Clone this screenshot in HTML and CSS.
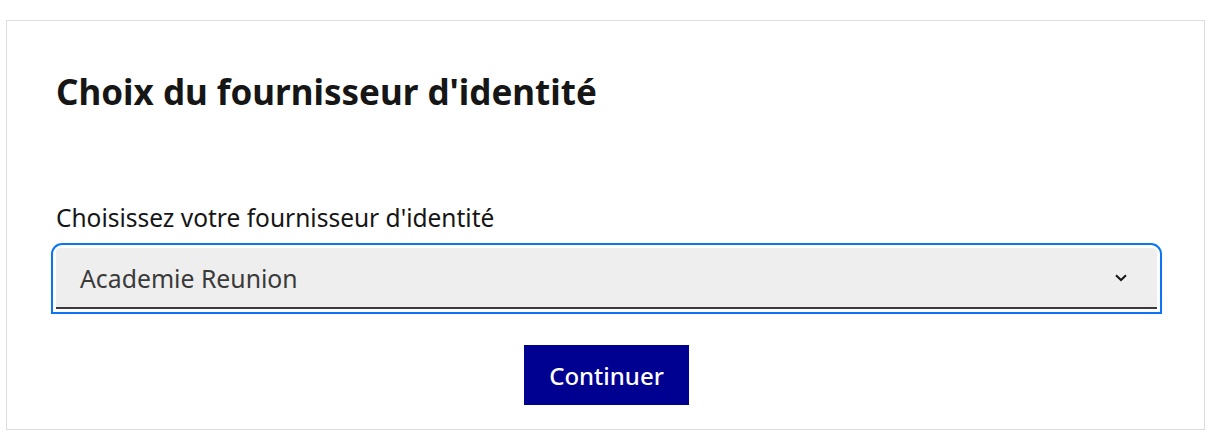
FILE: index.html
```html
<!DOCTYPE html>
<html lang="fr">
<head>
  <meta charset="UTF-8"/>
  <meta name="viewport" content="width=device-width, initial-scale=1.0"/>
  <title>Choix du fournisseur d'identité</title>
  <link rel="stylesheet" href="styles.css">
</head>
<body>
  <div class="card">
    <h1>Choix du fournisseur d'identité</h1>

    <form class="idp-form">
      <label for="idp" class="label">Choisissez votre fournisseur d'identité</label>
      <div class="select-wrap">
        <div class="select" id="idp">
          <span>Academie Reunion</span>
          <svg class="chevron" width="12" height="8" viewBox="0 0 12 8">
            <path d="M1 1.2 L6 6 L11 1.2" fill="none" stroke="#161616" stroke-width="2"/>
          </svg>
        </div>
      </div>
      <div class="actions">
        <button type="button">Continuer</button>
      </div>
    </form>
  </div>
</body>
</html>
```

FILE: styles.css
```css
body {
  font-family: "Noto Sans", sans-serif;
  margin: 0;
  padding: 20px 11px 0 6px;
  background: #fff;
  color: #161616;
}

.card {
  border: 1px solid #dddddd;
  padding: 0 47px 24px 49px;
}

h1 {
  font-size: 35px;
  font-weight: 700;
  margin: 49px 0 0 0;
  line-height: 44px;
}

.idp-form {
  margin-top: 88px;
}

.label {
  display: block;
  font-size: 24.5px;
  line-height: 32px;
  margin-bottom: 14px;
}

.select-wrap {
  outline: 2px solid #0a76f6;
  outline-offset: 3px;
  border-radius: 6px 6px 0 0;
}

.select {
  display: flex;
  align-items: center;
  justify-content: space-between;
  height: 59px;
  padding: 0 30px 0 24px;
  background: #eeeeee;
  border-radius: 4px 4px 0 0;
  border-bottom: 2px solid #3a3a3a;
  font-size: 24.8px;
  line-height: 32px;
  color: #3a3a3a;
}

.chevron {
  display: block;
}

.actions {
  display: flex;
  justify-content: center;
  margin-top: 36px;
}

button {
  font-family: inherit;
  font-size: 24px;
  font-weight: 500;
  background: #000091;
  color: #fff;
  border: none;
  width: 165px;
  height: 60px;
  padding: 0;
  cursor: pointer;
}
```
